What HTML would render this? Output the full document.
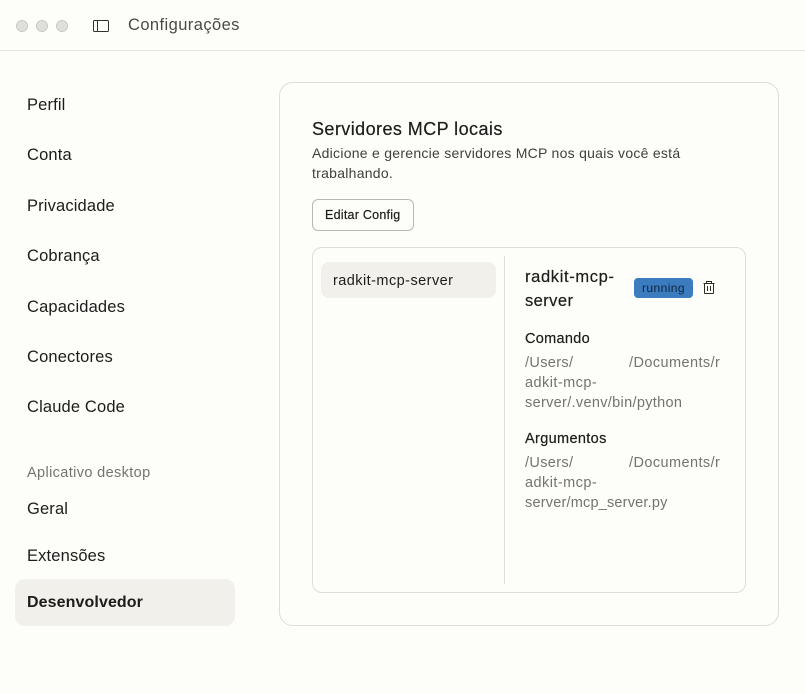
<!DOCTYPE html>
<html lang="pt"><head><meta charset="utf-8"><title>Configurações</title>
<style>
html,body{margin:0;padding:0}
body{width:805px;height:694px;background:#fdfdf9;position:relative;overflow:hidden;font-family:"Liberation Sans",sans-serif;color:#1c1c1a}
.t{position:absolute;white-space:nowrap;line-height:20px}
.b{position:absolute;box-sizing:border-box}
.n{font-size:16.500px;left:27px;letter-spacing:.15px}
.g{color:#74746f;font-size:14.500px;letter-spacing:.35px}
.s{color:#3f3f3b;font-size:14px;letter-spacing:.27px}
.m{-webkit-text-stroke:.2px currentColor}
.dot{position:absolute;top:20px;width:12px;height:12px;border-radius:50%;background:#dfdfdc;border:.5px solid #c9c9c6;box-sizing:border-box}
</style></head><body>
<div class="dot" style="left:16px"></div><div class="dot" style="left:36px"></div><div class="dot" style="left:56px"></div>
<svg style="position:absolute;left:93px;top:20px" width="16" height="13" fill="none" stroke="#333331" stroke-width="1"><rect x=".5" y=".5" width="15" height="11" rx="1"/><path d="M4.500 .5v11"/></svg>
<div class="t" style="left:128px;top:15px;font-size:16.500px;color:#4a4a46;letter-spacing:.42px">Configurações</div>
<div class="b" style="left:0;top:50px;width:805px;height:1px;background:#e3e3df"></div>

<div class="t n" style="top:95px">Perfil</div>
<div class="t n" style="top:145px">Conta</div>
<div class="t n" style="top:196px">Privacidade</div>
<div class="t n" style="top:246px">Cobrança</div>
<div class="t n" style="top:297px">Capacidades</div>
<div class="t n" style="top:347px">Conectores</div>
<div class="t n" style="top:397px">Claude Code</div>
<div class="t" style="left:27px;top:463px;font-size:14.500px;color:#74746f;letter-spacing:.37px">Aplicativo desktop</div>
<div class="t n" style="top:499px">Geral</div>
<div class="t n" style="top:546px">Extensões</div>
<div class="b" style="left:15px;top:579px;width:220px;height:47px;background:#f1f0ea;border-radius:10px"></div>
<div class="t" style="left:27px;font-size:16px;top:593px;font-weight:bold;letter-spacing:.1px">Desenvolvedor</div>

<div class="b" style="left:279px;top:82px;width:500px;height:544px;border:1px solid #deded9;border-radius:14px"></div>
<div class="t m" style="left:312px;top:119px;font-size:18px;letter-spacing:.43px">Servidores MCP locais</div>
<div class="t s" style="left:312px;top:143px">Adicione e gerencie servidores MCP nos quais você está</div>
<div class="t s" style="left:312px;top:163px">trabalhando.</div>
<div class="b" style="left:312px;top:199px;width:102px;height:32px;border:1px solid #b9b9b3;border-radius:6px"></div>
<div class="t m" style="left:325px;top:205px;font-size:12.500px;letter-spacing:.25px">Editar Config</div>

<div class="b" style="left:312px;top:247px;width:434px;height:346px;border:1px solid #deded9;border-radius:10px"></div>
<div class="b" style="left:321px;top:262px;width:175px;height:36px;background:#f1f0ea;border-radius:8px"></div>
<div class="t" style="left:333px;top:271px;font-size:14.500px;letter-spacing:.45px">radkit-mcp-server</div>
<div class="b" style="left:504px;top:256px;width:1px;height:328px;background:#deded9"></div>

<div class="t m" style="left:525px;top:267px;font-size:16.500px;letter-spacing:.65px">radkit-mcp-</div>
<div class="t m" style="left:525px;top:291px;font-size:16.500px;letter-spacing:.42px">server</div>
<div class="b" style="left:634px;top:278px;width:59px;height:20px;background:#3b7cc0;border-radius:4px"></div>
<div class="t" style="left:642px;top:278px;font-size:12px;color:#10233a;letter-spacing:.42px">running</div>
<svg style="position:absolute;left:702px;top:280px" width="14" height="15" fill="none" stroke="#2b2b29" stroke-width="1"><path d="M1.500 3.500h11M4.500 3.500V1.500h5v2M2.500 3.500v9.500a.5.5 0 0 0 .5.5h8a.5.5 0 0 0 .5-.5V3.500M5.500 6v5M8.500 6v5"/></svg>

<div class="t m" style="left:525px;top:329px;font-size:14.500px;letter-spacing:.3px">Comando</div>
<div class="t g" style="left:525px;top:353px">/Users/</div>
<div class="t g" style="left:629px;top:353px;letter-spacing:.42px">/Documents/r</div>
<div class="t g" style="left:525px;top:373px;letter-spacing:.45px">adkit-mcp-</div>
<div class="t g" style="left:525px;top:393px;letter-spacing:.32px">server/.venv/bin/python</div>
<div class="t m" style="left:525px;top:429px;font-size:14.500px;letter-spacing:.35px">Argumentos</div>
<div class="t g" style="left:525px;top:453px">/Users/</div>
<div class="t g" style="left:629px;top:453px;letter-spacing:.42px">/Documents/r</div>
<div class="t g" style="left:525px;top:473px;letter-spacing:.45px">adkit-mcp-</div>
<div class="t g" style="left:525px;top:493px;letter-spacing:.2px">server/mcp_server.py</div>
</body></html>
